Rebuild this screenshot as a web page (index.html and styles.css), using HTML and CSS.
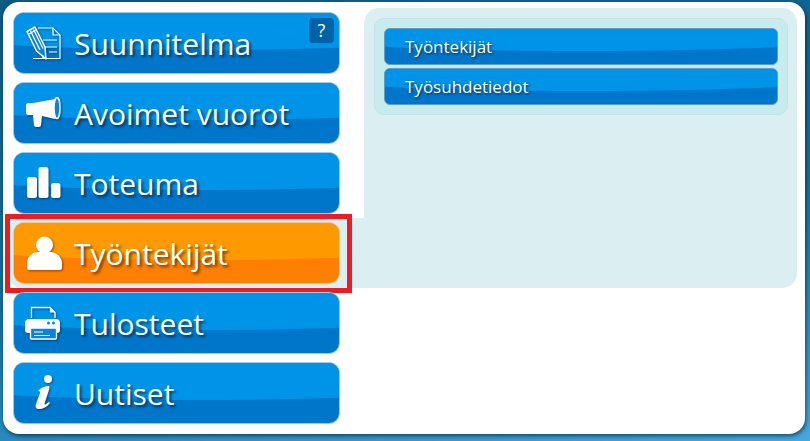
FILE: index.html
```html
<!DOCTYPE html>
<html lang="fi">
<head>
<meta charset="utf-8">
<title>Työntekijät</title>
<link rel="stylesheet" href="styles.css">
</head>
<body>
<div class="sheet">
  <nav class="nav">
    <div class="row">
      <a class="btn">
        <svg class="ico" viewBox="0 0 37 40"><g fill="none" stroke="#fff" stroke-width="1.2"><path d="M13 5h15l7 7v23.500H8"/><path d="M28 5v7h7"/><path d="M18 17h14M20 24h12M24 29h8"/></g><path d="M2 8.500l8-4.500 10 20 1 12-9.500-8z" fill="#0a84d8" stroke="#fff" stroke-width="1.500" stroke-linejoin="round"/><path d="M5.500 8l9.500 19M8.500 6.500l9.500 19M4 11l7-4" fill="none" stroke="#fff" stroke-width="1.300"/><path d="M18 32l3 4-4-1z" fill="#fff"/></svg>
        <span class="lbl">Suunnitelma</span>
        <span class="help">?</span>
      </a>
    </div>
    <div class="row">
      <a class="btn">
        <svg class="ico" viewBox="0 0 37 40"><path d="M1 12c0-1 1-2 2-2h5l22-4v20L17 23l-1 9c0 1-1 2-2 2h-3c-1 0-2-1-2-2l-1-10H3c-1 0-2-1-2-2z" fill="#fff"/><ellipse cx="32" cy="15" rx="3" ry="10.500" fill="#0a84d8" stroke="#fff" stroke-width="1.500"/></svg>
        <span class="lbl">Avoimet vuorot</span>
      </a>
    </div>
    <div class="row">
      <a class="btn">
        <svg class="ico" viewBox="0 0 37 40"><rect x="2" y="14" width="10" height="21" rx="2.500" fill="#fff"/><rect x="13.500" y="4" width="10" height="31" rx="2.500" fill="#fff"/><rect x="26" y="20" width="9.500" height="15" rx="2.500" fill="#fff"/></svg>
        <span class="lbl">Toteuma</span>
      </a>
    </div>
    <div class="row row-active">
      <a class="btn btn-active">
        <svg class="ico" viewBox="0 0 37 40"><circle cx="19.500" cy="12" r="8.500" fill="#fff"/><path d="M2 35V30c0-6 5-11 11-11h12c6 0 12 5 12 11v5c0 1-1 2-2 2H4c-1 0-2-1-2-2z" fill="#fff"/></svg>
        <span class="lbl">Työntekijät</span>
      </a>
    </div>
    <div class="row">
      <a class="btn">
        <svg class="ico" viewBox="0 0 37 40"><path d="M6.500 15V4.500H25l5 5V15" fill="none" stroke="#fff" stroke-width="1.300"/><path d="M25 4.500v5h5z" fill="#fff"/><path d="M4 16h27c3 0 4 2 4 4v7c0 2-1 3-3 3H3c-2 0-3-1-3-3v-7c0-2 1-4 4-4z" fill="#fff"/><circle cx="23.500" cy="20" r="1.500" fill="#0a84d8"/><circle cx="28.500" cy="20" r="1.500" fill="#0a84d8"/><rect x="5.500" y="25" width="26" height="11" rx="1" fill="#0a84d8" stroke="#fff" stroke-width="1.300"/><path d="M9 29h9M9 32.500h16" stroke="#fff" stroke-width="1.100"/></svg>
        <span class="lbl">Tulosteet</span>
      </a>
    </div>
    <div class="row">
      <a class="btn">
        <svg class="ico" viewBox="0 0 37 40"><circle cx="23" cy="6" r="4" fill="#fff"/><path d="M14 17c3-3 7-4 10-4 1 1 0 4-1 7l-3 9c-1 2 0 3 1 2l3-2 1 1c-3 4-7 6-11 6-3 0-4-2-3-5l4-11c0-2-1-2-2-2l-1 1z" fill="#fff"/></svg>
        <span class="lbl">Uutiset</span>
      </a>
    </div>
  </nav>
  <main class="panel">
    <div class="sub-box">
      <a class="sub-btn"><span class="sub-lbl">Työntekijät</span></a>
      <a class="sub-btn"><span class="sub-lbl">Työsuhdetiedot</span></a>
    </div>
  </main>
</div>
</body>
</html>
```
FILE: styles.css
```css
* { box-sizing: border-box; }
html, body { margin: 0; height: 441px; overflow: hidden; }
body {
  padding: 2px 5px 7px 3px;
  background: linear-gradient(170deg, #0b5a84 0%, #14709f 55%, #45a8e0 100%);
  font-family: "Open Sans", sans-serif;
}
.sheet {
  display: flex;
  align-items: flex-start;
  height: 432px;
  padding: 6px 8px 0 7px;
  background: #fff;
  border-radius: 16px;
  box-shadow: 1px 2px 4px rgba(0, 0, 0, .55);
}
.nav { width: 354px; flex: none; }
.row {
  position: relative;
  height: 70px;
  padding: 4px 24px 4px 3px;
}
.row-active {
  background: #dbeef1;
  border-radius: 10px 0 0 10px;
}
.row-active::after {
  content: "";
  position: absolute;
  inset: -4px 12px -5px -5px;
  border: 5px solid #ed1c24;
  pointer-events: none;
}
.btn, .sub-btn {
  position: relative;
  display: flex;
  align-items: center;
  overflow: hidden;
  color: #fff;
  background: #0076ca;
  border: 1px solid #a6c8e2;
}
.btn {
  height: 62px;
  padding-left: 11px;
  border-radius: 11px;
}
.btn::before, .sub-btn::before {
  content: "";
  position: absolute;
  background: #0094e8;
  border-radius: 50%;
}
.btn::before { left: -210px; top: -43px; width: 800px; height: 80px; }
.sub-btn::before { left: -300px; top: -78px; width: 1000px; height: 100px; }
.btn-active { background: #ff7f00; border-color: #f3c98f; }
.btn-active::before { background: #ff9900; }
.ico {
  position: relative;
  width: 37px;
  height: 40px;
  flex: none;
  margin-right: 12px;
  filter: drop-shadow(1px 1px 1px rgba(0, 0, 0, .45));
}
.lbl {
  position: relative;
  top: 1px;
  font-size: 30px;
  line-height: 40px;
  text-shadow: 2px 2px 3px rgba(0, 0, 0, .6);
}
.help {
  position: absolute;
  top: 5px;
  right: 5px;
  width: 25px;
  height: 25px;
  font-size: 18px;
  line-height: 25px;
  text-align: center;
  background: #0062a8;
  border-radius: 4px;
}
.panel {
  width: 433px;
  height: 280px;
  flex: none;
  padding: 10px 9px 0 10px;
  background: #dbeef1;
  border-radius: 15px 15px 15px 0;
}
.sub-box {
  display: flex;
  flex-direction: column;
  gap: 3px;
  height: 97px;
  padding: 9px 9px 9px 9px;
  background: #c8ebee;
  border: 1px solid #c2e4e8;
  border-radius: 10px;
}
.sub-btn {
  height: 37px;
  padding-left: 20px;
  border-radius: 6px;
  border-color: #5f9cc8;
}
.sub-lbl {
  position: relative;
  font-size: 17px;
  text-shadow: 1px 1px 3px rgba(0, 0, 0, .7);
}
```
